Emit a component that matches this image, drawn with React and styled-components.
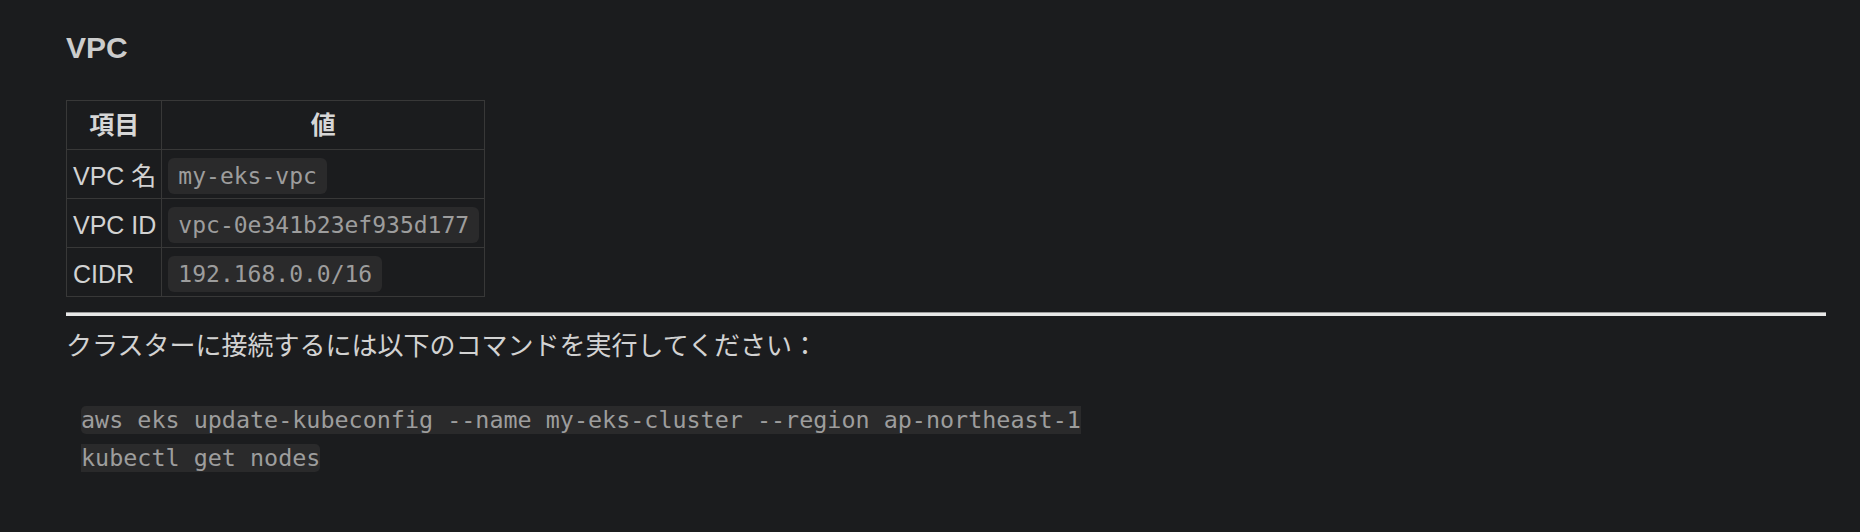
import styled, { createGlobalStyle } from 'styled-components';

const GlobalStyle = createGlobalStyle`
  html,
  body {
    margin: 0;
    padding: 0;
    background-color: #1b1c1e;
  }

  * {
    box-sizing: border-box;
  }
`;

const rows = [
  { label: 'VPC 名', value: 'my-eks-vpc' },
  { label: 'VPC ID', value: 'vpc-0e341b23ef935d177' },
  { label: 'CIDR', value: '192.168.0.0/16' },
];

const commands = `aws eks update-kubeconfig --name my-eks-cluster --region ap-northeast-1
kubectl get nodes`;

export default function App() {
  return (
    <>
      <GlobalStyle />
      <Page>
        <Heading>VPC</Heading>

        <Table>
          <thead>
            <tr>
              <Th>項目</Th>
              <Th>値</Th>
            </tr>
          </thead>
          <tbody>
            {rows.map((row) => (
              <tr key={row.label}>
                <Td>{row.label}</Td>
                <Td>
                  <InlineCode>{row.value}</InlineCode>
                </Td>
              </tr>
            ))}
          </tbody>
        </Table>

        <Rule />

        <Paragraph>クラスターに接続するには以下のコマンドを実行してください：</Paragraph>

        <CodeBlock>
          <BlockCode>{commands}</BlockCode>
        </CodeBlock>
      </Page>
    </>
  );
}

const Page = styled.main`
  min-height: 100vh;
  padding: 29px 34px 0 66px;
  font-family: 'Liberation Sans', 'Noto Sans CJK JP', sans-serif;
  font-size: 25px;
  color: #d2d2d2;
`;

const Heading = styled.h3`
  margin: 0 0 33px;
  font-size: 30px;
  line-height: 38px;
  font-weight: 700;
  color: #cccccc;
`;

const Table = styled.table`
  border-collapse: collapse;
  border: 1px solid #383838;
`;

const Th = styled.th`
  border: 1px solid #383838;
  padding: 6px 6px;
  line-height: 36px;
  font-weight: 700;
  text-align: center;
  color: #d6d6d6;
`;

const Td = styled.td`
  border: 1px solid #383838;
  padding: 8px 5px 4px 6px;
  line-height: 36px;
  vertical-align: top;
  white-space: nowrap;
`;

const InlineCode = styled.code`
  display: inline-block;
  height: 36px;
  padding: 0 10px;
  border-radius: 6px;
  background-color: #2a2a2b;
  color: #9d9d9d;
  font-family: 'DejaVu Sans Mono', monospace;
  font-size: 23px;
  line-height: 36px;
  vertical-align: top;
`;

const Rule = styled.hr`
  margin: 15px 0 10px;
  border: 0;
  height: 4px;
  background: linear-gradient(#9a9a9a 0 1.5px, #e8e8e8 1.5px 100%);
`;

const Paragraph = styled.p`
  margin: 0;
  font-size: 26px;
  line-height: 40px;
`;

const CodeBlock = styled.pre`
  margin: 35px 0 0;
  padding: 0 0 0 15px;
  font-family: 'DejaVu Sans Mono', monospace;
  font-size: 23.4px;
  line-height: 38px;
`;

const BlockCode = styled.code`
  background-color: #2a2a2b;
  border-radius: 5px;
  color: #9d9d9d;
  font-family: inherit;
`;
